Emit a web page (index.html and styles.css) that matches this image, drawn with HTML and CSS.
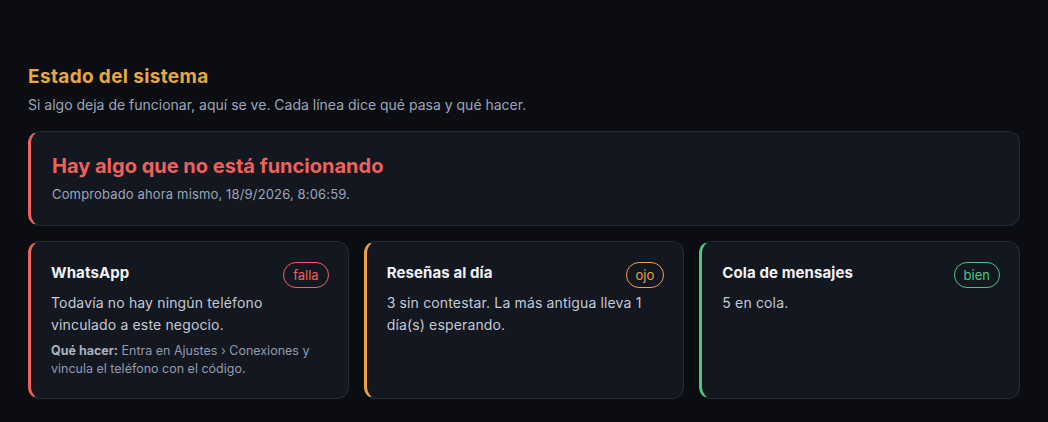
FILE: index.html
```html
<!DOCTYPE html>
<html lang="es">
<head>
<meta charset="utf-8">
<title>Estado del sistema</title>
<link rel="stylesheet" href="styles.css">
</head>
<body>
<main class="page">
  <header class="head">
    <h1 class="title">Estado del sistema</h1>
    <p class="lead">Si algo deja de funcionar, aquí se ve. Cada línea dice qué pasa y qué hacer.</p>
  </header>

  <section class="banner">
    <h2 class="banner-title">Hay algo que no está funcionando</h2>
    <p class="banner-sub">Comprobado ahora mismo, 18/9/2026, 8:06:59.</p>
  </section>

  <section class="cards">
    <article class="card card-bad">
      <div class="card-head">
        <h3 class="card-title">WhatsApp</h3>
        <span class="badge badge-bad">falla</span>
      </div>
      <p class="card-text">Todavía no hay ningún teléfono vinculado a este negocio.</p>
      <p class="card-hint"><strong>Qué hacer:</strong> Entra en Ajustes › Conexiones y vincula el teléfono con el código.</p>
    </article>
    <article class="card card-warn">
      <div class="card-head">
        <h3 class="card-title">Reseñas al día</h3>
        <span class="badge badge-warn">ojo</span>
      </div>
      <p class="card-text">3 sin contestar. La más antigua lleva 1 día(s) esperando.</p>
    </article>
    <article class="card card-ok">
      <div class="card-head">
        <h3 class="card-title">Cola de mensajes</h3>
        <span class="badge badge-ok">bien</span>
      </div>
      <p class="card-text">5 en cola.</p>
    </article>
  </section>
</main>
</body>
</html>
```

FILE: styles.css
```css
* { box-sizing: border-box; }
html, body { margin: 0; padding: 0; }
body {
  background: #0b0d12;
  font-family: "Inter", "Noto Sans", sans-serif;
  color: #c4cad6;
  width: 1048px;
  height: 422px;
  overflow: hidden;
}
.page { padding: 64px 28px 0 28px; }
.head { margin-bottom: 16px; }
.title {
  margin: 0;
  font-size: 19px;
  line-height: 25px;
  font-weight: 700;
  color: #e4a943;
  letter-spacing: 0.35px;
}
.lead {
  margin: 6px 0 0 0;
  font-size: 14px;
  line-height: 20px;
  color: #9ca6b9;
}
.banner {
  background: #121720;
  border: 1px solid #252a34;
  border-left: 3px solid #f0605d;
  border-radius: 12px;
  padding: 20px 21px 22px 21px;
  margin-bottom: 15px;
}
.banner-title {
  margin: 0;
  font-size: 20px;
  line-height: 28px;
  font-weight: 700;
  color: #f2605d;
}
.banner-sub {
  margin: 5px 0 0 0;
  font-size: 13px;
  line-height: 18px;
  color: #9ca6b9;
  letter-spacing: 0.15px;
}
.cards {
  display: grid;
  grid-template-columns: repeat(3, 1fr);
  gap: 15px;
}
.card {
  background: #121720;
  border: 1px solid #252a34;
  border-left: 3px solid #252a34;
  border-radius: 12px;
  padding: 20px 19px 20px 20px;
  min-height: 158px;
}
.card-bad { border-left-color: #f0605d; }
.card-warn { border-left-color: #eea04a; }
.card-ok { border-left-color: #52c47f; }
.card-head {
  display: flex;
  justify-content: space-between;
  align-items: flex-start;
  height: 26px;
}
.card-title {
  margin: 0;
  font-size: 15px;
  line-height: 22px;
  font-weight: 700;
  color: #f1f3f7;
  letter-spacing: 0.1px;
}
.badge {
  display: inline-flex;
  align-items: center;
  height: 26px;
  padding: 0 9px;
  border: 1px solid;
  border-radius: 13px;
  font-size: 13px;
  line-height: 1;
}
.badge-bad { color: #f2605d; border-color: #f2605d; }
.badge-warn { color: #eea04a; border-color: #eea04a; }
.badge-ok { color: #52c47f; border-color: #52c47f; }
.card-text {
  margin: 4px 0 0 0;
  font-size: 14px;
  line-height: 22px;
  color: #c4cad6;
  letter-spacing: 0.15px;
}
.card-hint {
  margin: 6px 0 0 0;
  font-size: 12.5px;
  line-height: 18px;
  color: #939cad;
}
.card-hint strong { color: #aab2c0; font-weight: 700; }
```
